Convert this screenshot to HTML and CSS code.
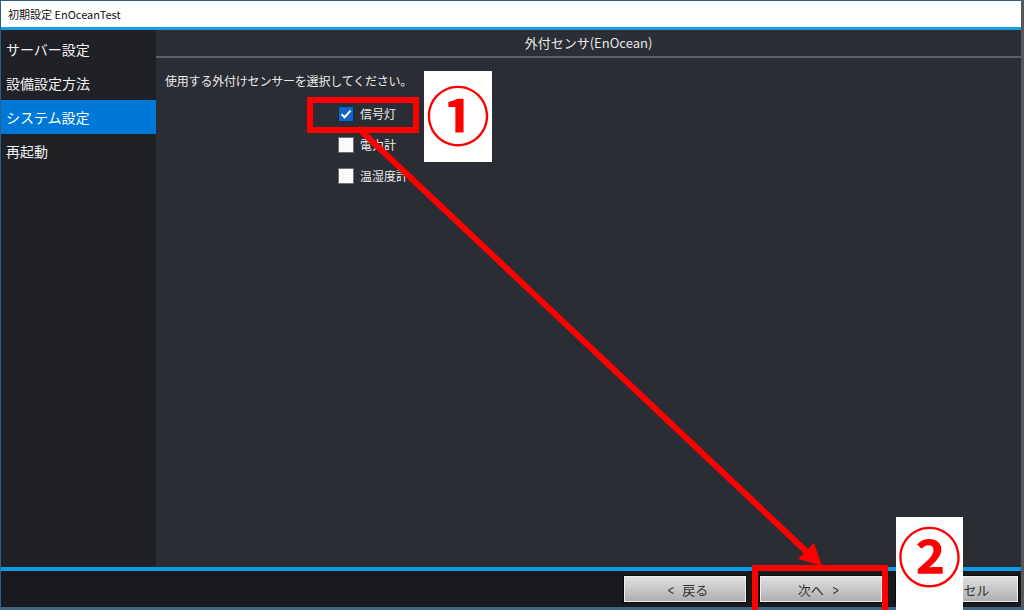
FILE: index.html
```html
<!DOCTYPE html>
<html lang="ja">
<head>
<meta charset="utf-8">
<title>初期設定 EnOceanTest</title>
<link rel="stylesheet" href="styles.css">
</head>
<body>
<div class="window">
  <div class="titlebar">初期設定 EnOceanTest</div>
  <div class="accent"></div>
  <div class="main">
    <nav class="sidebar">
      <div class="nav-item">サーバー設定</div>
      <div class="nav-item">設備設定方法</div>
      <div class="nav-item active">システム設定</div>
      <div class="nav-item">再起動</div>
    </nav>
    <section class="content">
      <div class="header">外付センサ(EnOcean)</div>
      <div class="body">
        <p class="prompt">使用する外付けセンサーを選択してください。</p>
        <ul class="checks">
          <li class="check"><span class="box checked"><svg viewBox="0 0 16 16" width="16" height="16"><path d="M3.5 8.2 L6.6 11.2 L12.6 4.6" fill="none" stroke="#fff" stroke-width="2"/></svg></span>信号灯</li>
          <li class="check"><span class="box"></span>電力計</li>
          <li class="check"><span class="box"></span>温湿度計</li>
        </ul>
      </div>
    </section>
  </div>
  <div class="accent accent-bottom"></div>
  <div class="footer">
    <button class="btn"><span class="chev">&lt;</span> 戻る</button>
    <button class="btn">次へ <span class="chev">&gt;</span></button>
    <button class="btn">キャンセル</button>
  </div>
</div>

<svg class="annot" width="1024" height="610" viewBox="0 0 1024 610">
  <rect x="310" y="100" width="106" height="30" fill="none" stroke="#ff0000" stroke-width="6"/>
  <line x1="358" y1="128" x2="808" y2="553" stroke="#ff0000" stroke-width="6"/>
  <polygon points="822,566 798,559 814,543" fill="#ff0000"/>
  <rect x="755" y="568" width="130" height="46" fill="none" stroke="#ff0000" stroke-width="6"/>
</svg>
<div class="badge badge-1">①</div>
<div class="badge badge-2">②</div>
</body>
</html>
```

FILE: styles.css
```css
* { box-sizing: border-box; }
html, body { margin: 0; padding: 0; }
body {
  width: 1024px;
  height: 610px;
  position: relative;
  overflow: hidden;
  font-family: "Noto Sans CJK JP", "Noto Sans", sans-serif;
  background: #2a2d33;
}
.window {
  width: 1024px;
  height: 610px;
  display: flex;
  flex-direction: column;
  border-top: 1px solid #2d5f86;
  border-left: 1px solid #2d5f86;
  border-right: 3px solid #55595e;
  border-bottom: 3px solid #3f6682;
  background: #2a2d33;
}
.titlebar {
  height: 26px;
  background: #ffffff;
  color: #111;
  font-size: 11px;
  line-height: 26px;
  padding-left: 7px;
}
.accent {
  height: 3px;
  background: #1a9de4;
}
.accent-bottom { height: 4px; background: #0a9de6; }
.main {
  flex: 1;
  display: flex;
  min-height: 0;
}
.sidebar {
  width: 155px;
  background: #1f2126;
  padding-top: 2px;
}
.nav-item {
  height: 34px;
  line-height: 34px;
  padding-left: 5px;
  color: #f2f2f2;
  font-size: 14px;
}
.nav-item.active { background: #0078d7; color: #fff; }
.content {
  flex: 1;
  display: flex;
  flex-direction: column;
  background: #2a2d33;
}
.header {
  height: 28px;
  line-height: 26px;
  text-align: center;
  color: #e8e8e8;
  font-size: 13px;
  background: #2b2e34;
  border-bottom: 2px solid #5e6166;
}
.body {
  padding-left: 9px;
}
.prompt {
  margin: 14px 0 0;
  height: 18px;
  line-height: 18px;
  font-size: 12px;
  color: #ececec;
  letter-spacing: -0.2px;
}
.checks {
  list-style: none;
  margin: 8px 0 0 173px;
  padding: 0;
}
.check {
  height: 31px;
  display: flex;
  align-items: center;
  gap: 6px;
  font-size: 12px;
  color: #ececec;
}
.box {
  width: 16px;
  height: 16px;
  background: #fbfbfb;
  border: 1px solid #6b6e73;
  display: flex;
  align-items: center;
  justify-content: center;
}
.box svg { display: block; margin: -1px; }
.box.checked { background: #1463c2; border-color: #0d2f59; }
.footer {
  height: 36px;
  background: #18191c;
  display: flex;
  justify-content: flex-end;
  align-items: flex-start;
  gap: 12px;
  padding: 4px 2px 0 0;
}
.btn {
  width: 124px;
  height: 28px;
  border: 1px solid #0c0c0c;
  background: linear-gradient(#e2e2e2, #adadad);
  color: #333;
  font-family: "Noto Sans CJK JP", "Noto Sans", sans-serif;
  font-size: 13px;
  padding: 0;
  box-shadow: inset 0 0 0 1px #efefef;
}
.chev {
  font-family: "DejaVu Sans", sans-serif;
  font-size: 14px;
  margin: 0 3px;
  display: inline-block;
  transform: scaleX(0.6);
}
.annot {
  position: absolute;
  left: 0;
  top: 0;
  pointer-events: none;
}
.badge {
  position: absolute;
  background: #ffffff;
  color: #ff0000;
  display: flex;
  justify-content: center;
  font-family: "Noto Sans CJK JP", sans-serif;
  font-weight: 700;
  font-size: 64px;
  line-height: 1;
}
.badge-1 { left: 424px; top: 71px; width: 68px; height: 91px; padding-top: 9px; }
.badge-2 { left: 896px; top: 517px; width: 67px; height: 93px; padding-top: 4px; }
```
